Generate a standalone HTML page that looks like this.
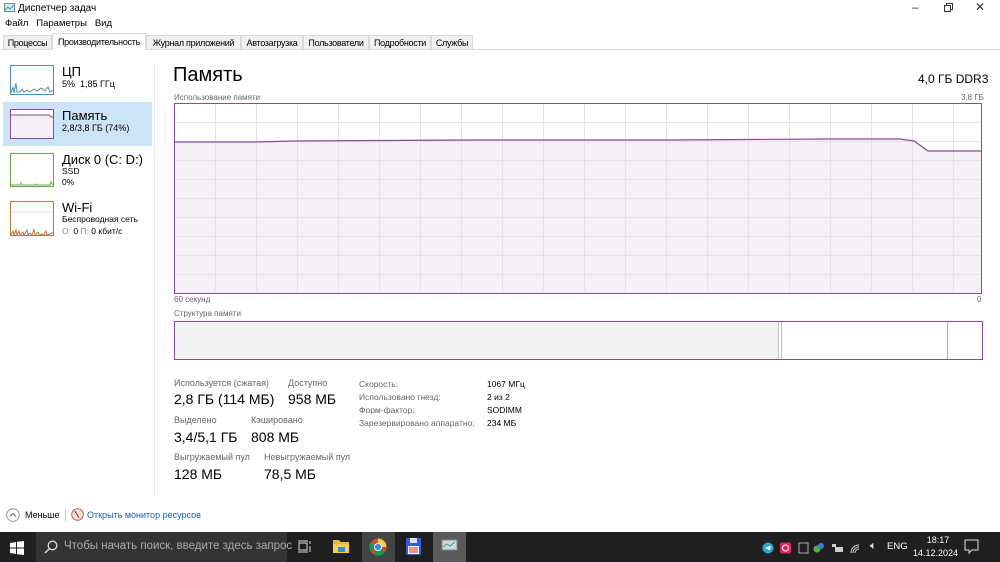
<!DOCTYPE html>
<html><head><meta charset="utf-8"><style>
*{margin:0;padding:0;box-sizing:border-box}
body{width:1000px;height:562px;overflow:hidden;background:#fff;font-family:"Liberation Sans","DejaVu Sans",sans-serif;color:#000;position:relative}
.a{position:absolute;white-space:nowrap}
.s{font-size:9px;color:#666}
.tab{position:absolute;top:35px;height:15px;font-size:9px;letter-spacing:-0.3px;line-height:14px;padding:0 2px;border:1px solid #d9d9d9;background:#f0f0f0;white-space:nowrap;overflow:hidden;text-align:center}
</style></head><body>
<!-- title -->
<svg class="a" style="left:4px;top:3px" width="11" height="10"><rect x="0.5" y="0.5" width="10" height="8" fill="#dfe8f2" stroke="#6a8fb5"/><polyline points="1,7 4,4 6,6 10,2" fill="none" stroke="#3a6" stroke-width="1"/></svg>
<div class="a" style="left:18px;top:3px;font-size:10px">Диспетчер задач</div>
<div class="a" style="left:912px;top:0px;font-size:12px;color:#333">–</div>
<svg class="a" style="left:944px;top:3px" width="9" height="9"><rect x="0.5" y="2.5" width="6" height="6" fill="none" stroke="#333"/><path d="M2.5 2.5V0.5H8.5V6.5H6.5" fill="none" stroke="#333"/></svg>
<div class="a" style="left:975px;top:0px;font-size:12px;color:#333">✕</div>
<div class="a" style="left:5px;top:18px;font-size:9.5px">Файл&nbsp;&nbsp;&nbsp;Параметры&nbsp;&nbsp;&nbsp;Вид</div>
<!-- tabs -->
<div class="a" style="left:0;top:49px;width:1000px;height:1px;background:#d9d9d9"></div>
<div class="tab" style="left:3px;width:49px">Процессы</div>
<div class="tab" style="left:52px;width:94px;background:#fff;border-bottom-color:#fff;top:33px;height:17px;line-height:16px">Производительность</div>
<div class="tab" style="left:146px;width:95px">Журнал приложений</div>
<div class="tab" style="left:241px;width:62px">Автозагрузка</div>
<div class="tab" style="left:303px;width:66px">Пользователи</div>
<div class="tab" style="left:369px;width:62px">Подробности</div>
<div class="tab" style="left:431px;width:42px">Службы</div>
<!-- sidebar -->
<div class="a" style="left:154px;top:64px;width:1px;height:432px;background:#e8e8e8"></div>
<svg class="a" style="left:10px;top:65px" width="44" height="30"><rect x="0.5" y="0.5" width="43" height="29" fill="#fff" stroke="#4a90c2"/><polyline points="1,28 3,22 4,28 6,18 7,27 10,27 12,24 14,27 17,25 20,27 24,24 27,26 31,23 35,26 38,22 40,27 43,25" fill="none" stroke="#4a90c2"/></svg>
<div class="a" style="left:62px;top:64px;font-size:13px">ЦП</div>
<div class="a" style="left:62px;top:79px;font-size:9px">5%&nbsp; 1,85 ГГц</div>
<div class="a" style="left:3px;top:102px;width:149px;height:44px;background:#cce4f7"></div>
<svg class="a" style="left:10px;top:109px" width="44" height="30"><rect x="0.5" y="0.5" width="43" height="29" fill="#f4eef5" stroke="#8b4a9c"/><rect x="1" y="1" width="42" height="5" fill="#fff"/><polyline points="1,6 39,6 41,8 43,8" fill="none" stroke="#8b4a9c"/></svg>
<div class="a" style="left:62px;top:108px;font-size:13px">Память</div>
<div class="a" style="left:62px;top:123px;font-size:9px">2,8/3,8 ГБ (74%)</div>
<svg class="a" style="left:10px;top:153px" width="44" height="34"><rect x="0.5" y="0.5" width="43" height="33" fill="#fff" stroke="#6aa84f"/><polyline points="1,32 10,32 11,30 12,32 25,32 26,31 27,32 40,32 41,29 43,32" fill="none" stroke="#6aa84f"/></svg>
<div class="a" style="left:62px;top:152px;font-size:13px">Диск 0 (C: D:)</div>
<div class="a" style="left:62px;top:166px;font-size:8.5px">SSD</div>
<div class="a" style="left:62px;top:177px;font-size:8.5px">0%</div>
<svg class="a" style="left:10px;top:201px" width="44" height="35"><rect x="0.5" y="0.5" width="43" height="34" fill="#fff" stroke="#b37a3a"/><line x1="1" y1="11" x2="43" y2="11" stroke="#ddd"/><polyline points="1,34 3,30 4,34 6,29 7,34 9,30 10,34 13,31 14,34 17,29 18,34 20,32 22,34 24,28 25,34 28,31 29,34 32,33 34,34 36,30 37,34 40,33 43,31" fill="none" stroke="#b37a3a"/></svg>
<div class="a" style="left:62px;top:200px;font-size:13px">Wi-Fi</div>
<div class="a" style="left:62px;top:214px;font-size:8.5px">Беспроводная сеть</div>
<div class="a" style="left:62px;top:226px;font-size:8.5px"><span style="color:#888">О:</span> 0 <span style="color:#888">П:</span> 0 кбит/с</div>
<!-- main -->
<div class="a" style="left:173px;top:64px;font-size:20px">Память</div>
<div class="a" style="left:918px;top:72px;font-size:12px">4,0 ГБ DDR3</div>
<div class="a s" style="left:174px;top:93px;font-size:8px">Использование памяти</div>
<div class="a s" style="left:961px;top:93px;font-size:8px">3,8 ГБ</div>
<svg class="a" style="left:174px;top:103px" width="809" height="192" shape-rendering="crispEdges">
<rect width="809" height="192" fill="#fff"/>
<path d="M1 39L80 39 120 38 300 37 500 37 650 36 726 36 740 38 754 48 808 48V191H1Z" fill="#f4f0f6" shape-rendering="auto"/>
<g stroke="#e8e0ec" stroke-width="1">
<path d="M41.5 0V191M82.5 0V191M123.5 0V191M164.5 0V191M205.5 0V191M246.5 0V191M287.5 0V191M328.5 0V191M369.5 0V191M410.5 0V191M451.5 0V191M492.5 0V191M533.5 0V191M574.5 0V191M615.5 0V191M656.5 0V191M697.5 0V191M738.5 0V191M779.5 0V191"/>
<path d="M0 19.5H808M0 38.5H808M0 57.5H808M0 76.5H808M0 95.5H808M0 114.5H808M0 133.5H808M0 152.5H808M0 171.5H808"/>
</g>
<polyline points="1,39 80,39 120,38 300,37 500,37 650,36 726,36 740,38 754,48 808,48" fill="none" stroke="#8b4a9c" stroke-width="1.2" shape-rendering="auto"/>
<rect x="0.5" y="0.5" width="807" height="190" fill="none" stroke="#8b4a9c"/>
</svg>
<div class="a s" style="left:174px;top:295px;font-size:8px">60 секунд</div>
<div class="a s" style="left:977px;top:295px;font-size:8px">0</div>
<div class="a s" style="left:174px;top:309px;font-size:8px">Структура памяти</div>
<div class="a" style="left:174px;top:321px;width:809px;height:39px;border:1px solid #8b4a9c;background:#fff">
<div class="a" style="left:0;top:0;width:604px;height:37px;background:#f2f2f2;border-right:1px solid #c8b8cc"></div>
<div class="a" style="left:606px;top:0;width:1px;height:37px;background:#c8b8cc"></div>
<div class="a" style="left:772px;top:0;width:1px;height:37px;background:#b8a8bc"></div>
</div>
<div class="a s" style="left:174px;top:378px;font-size:9px">Используется (сжатая)</div>
<div class="a" style="left:174px;top:391px;font-size:14px">2,8 ГБ (114 МБ)</div>
<div class="a s" style="left:288px;top:378px;font-size:9px">Доступно</div>
<div class="a" style="left:288px;top:391px;font-size:14px">958 МБ</div>
<div class="a s" style="left:174px;top:415px;font-size:9px">Выделено</div>
<div class="a" style="left:174px;top:429px;font-size:14px">3,4/5,1 ГБ</div>
<div class="a s" style="left:251px;top:415px;font-size:9px">Кэшировано</div>
<div class="a" style="left:251px;top:429px;font-size:14px">808 МБ</div>
<div class="a s" style="left:174px;top:452px;font-size:9px">Выгружаемый пул</div>
<div class="a" style="left:174px;top:466px;font-size:14px">128 МБ</div>
<div class="a s" style="left:264px;top:452px;font-size:9px">Невыгружаемый пул</div>
<div class="a" style="left:264px;top:466px;font-size:14px">78,5 МБ</div>
<div class="a s" style="left:359px;top:378px;font-size:8.5px;line-height:13px">Скорость:<br>Использовано гнезд:<br>Форм-фактор:<br>Зарезервировано аппаратно:</div>
<div class="a" style="left:487px;top:378px;font-size:8.5px;line-height:13px">1067 МГц<br>2 из 2<br>SODIMM<br>234 МБ</div>
<!-- footer -->
<svg class="a" style="left:6px;top:508px" width="14" height="14"><circle cx="7" cy="7" r="6.3" fill="none" stroke="#999"/><polyline points="4,8.5 7,5.5 10,8.5" fill="none" stroke="#666"/></svg>
<div class="a" style="left:25px;top:510px;font-size:9px">Меньше</div>
<div class="a" style="left:65px;top:509px;width:1px;height:12px;background:#ccc"></div>
<svg class="a" style="left:71px;top:508px" width="13" height="13"><circle cx="6.5" cy="6.5" r="5.8" fill="#f3e6dd" stroke="#b46a4a"/><line x1="4" y1="3" x2="8" y2="10" stroke="#a33" stroke-width="1.2"/></svg>
<div class="a" style="left:87px;top:510px;font-size:9px;color:#1a5fa8">Открыть монитор ресурсов</div>
<!-- taskbar -->
<div class="a" style="left:0;top:532px;width:1000px;height:30px;background:#1f1f1f"></div>
<svg class="a" style="left:10px;top:541px" width="14" height="14"><path d="M0 2L6 1V6.5H0ZM7 0.8L14 0V6.5H7ZM0 7.5H6V13L0 12ZM7 7.5H14V14L7 13.2Z" fill="#fff"/></svg>
<div class="a" style="left:36px;top:532px;width:251px;height:30px;background:#333"></div>
<svg class="a" style="left:44px;top:540px" width="14" height="14"><circle cx="8.5" cy="5.5" r="4.3" fill="none" stroke="#ddd" stroke-width="1.3"/><line x1="5.5" y1="8.5" x2="1" y2="13" stroke="#ddd" stroke-width="1.5"/></svg>
<div class="a" style="left:64px;top:540px;font-size:11.5px;color:#aaa">Чтобы начать поиск, введите здесь запрос</div>
<svg class="a" style="left:298px;top:540px" width="14" height="13"><rect x="1" y="3" width="8" height="7" fill="none" stroke="#ddd"/><path d="M0 1H10M0 12H10M12 1V4M12 6V12" stroke="#ddd"/></svg>
<svg class="a" style="left:333px;top:539px" width="16" height="14"><path d="M0 1H6L7.5 3H16V14H0Z" fill="#e8b830"/><rect x="0" y="5" width="16" height="9" fill="#f6cd4c"/><rect x="5" y="8" width="7" height="5" fill="#3a8ad6"/></svg>
<div class="a" style="left:362px;top:532px;width:33px;height:30px;background:#444"></div>
<svg class="a" style="left:369px;top:538px" width="18" height="18"><circle cx="9" cy="9" r="8.5" fill="#db4437"/><path d="M9 9L16.4 13.3A8.5 8.5 0 0 1 4.8 16.4Z" fill="#0f9d58"/><path d="M9 9L1.6 13.3 A8.5 8.5 0 0 1 1.6 4.8Z" fill="#0f9d58"/><path d="M9 0.5A8.5 8.5 0 0 1 17.5 9L9 9Z" fill="#ffcd40"/><circle cx="9" cy="9" r="4" fill="#fff"/><circle cx="9" cy="9" r="3.1" fill="#4285f4"/></svg>
<svg class="a" style="left:406px;top:538px" width="15" height="17"><rect width="15" height="17" rx="1" fill="#2f5fd0"/><rect x="4" y="0" width="7" height="5" fill="#dde"/><rect x="2" y="8" width="11" height="8" fill="#f4f4f4"/><path d="M3 10H12M3 12H12M3 14H12" stroke="#d33"/></svg>
<div class="a" style="left:433px;top:532px;width:33px;height:30px;background:#5a5a5a"></div>
<svg class="a" style="left:441px;top:539px" width="17" height="14"><rect x="1" y="1" width="15" height="10" fill="#cfd8e0" stroke="#888"/><polyline points="2,8 6,5 9,7 14,3" stroke="#3a7" fill="none"/></svg>
<svg class="a" style="left:762px;top:541px" width="100" height="14">
<circle cx="6" cy="7" r="5.5" fill="#2aa3e0"/><path d="M3 7L9 4.5 8 9.5Z" fill="#fff"/>
<rect x="18" y="1.5" width="11" height="11" rx="2" fill="#e0245e"/><circle cx="23.5" cy="7" r="3" fill="none" stroke="#fff"/>
<rect x="37" y="2" width="9" height="10" fill="none" stroke="#aaa"/>
<circle cx="55" cy="8" r="3.5" fill="#56b04a"/><circle cx="59" cy="5" r="3" fill="#3a7fd0"/>
<rect x="70" y="3" width="4" height="3" fill="#ccc"/><rect x="73" y="6" width="8" height="5" fill="#ccc"/>
<path d="M89 12A8 8 0 0 1 97 4M91 12A6 6 0 0 1 97 6M93 12A4 4 0 0 1 97 8" fill="none" stroke="#ccc"/>
</svg>
<div class="a" style="left:870px;top:540px;font-size:11px;color:#ddd">🔈︎</div>
<div class="a" style="left:887px;top:541px;font-size:9.5px;color:#fff">ENG</div>
<div class="a" style="left:921px;top:535px;font-size:9px;color:#fff;text-align:center;width:34px">18:17</div>
<div class="a" style="left:913px;top:548px;font-size:9px;color:#fff">14.12.2024</div>
<svg class="a" style="left:964px;top:539px" width="15" height="15"><path d="M1 1H14V11H8L5 14V11H1Z" fill="none" stroke="#ddd"/></svg>
</body></html>
